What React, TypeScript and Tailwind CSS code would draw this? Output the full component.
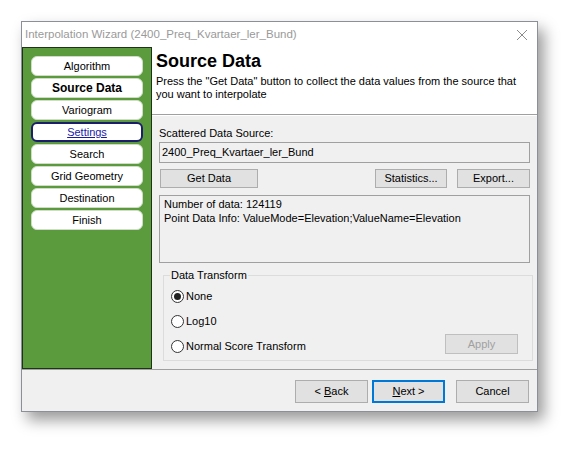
import React from "react";

const steps = [
  "Algorithm",
  "Source Data",
  "Variogram",
  "Settings",
  "Search",
  "Grid Geometry",
  "Destination",
  "Finish",
];

function WinButton({
  children,
  className = "",
  disabled = false,
  focused = false,
}: {
  children: React.ReactNode;
  className?: string;
  disabled?: boolean;
  focused?: boolean;
}) {
  return (
    <div
      className={`flex items-center justify-center bg-[#e1e1e1] ${
        focused ? "border-2 border-[#0078d7]" : "border border-[#adadad]"
      } ${disabled ? "text-[#a0a0a0] bg-[#cccccc] border-[#bfbfbf]" : "text-black"} ${className}`}
    >
      {children}
    </div>
  );
}

function Radio({ label, checked = false }: { label: string; checked?: boolean }) {
  return (
    <div className="flex items-center gap-[2px] h-[14px]">
      <div className="w-[13px] h-[13px] rounded-full border border-[#333] bg-white flex items-center justify-center">
        {checked && <div className="w-[7px] h-[7px] rounded-full bg-[#222]" />}
      </div>
      <span>{label}</span>
    </div>
  );
}

export default function App() {
  return (
    <div
      className="w-[580px] h-[454px] bg-white pt-[21px] pl-[21px] text-[11px] text-black"
      style={{ fontFamily: '"Liberation Sans", Arial, sans-serif' }}
    >
      <div className="w-[517px] h-[391px] border border-[#8a8f99] bg-[#f0f0f0] flex flex-col shadow-[6px_8px_14px_rgba(0,0,0,0.4)]">
        {/* title bar */}
        <div className="h-[25px] bg-white flex items-center justify-between pl-[3px] pr-[8px]">
          <span className="text-[11.5px] text-[#9a9a9a]">
            Interpolation Wizard (2400_Preq_Kvartaer_ler_Bund)
          </span>
          <svg width="12" height="12" viewBox="0 0 12 12" className="mr-[1px]">
            <path d="M1 1 L11 11 M11 1 L1 11" stroke="#8c8c8c" strokeWidth="1" />
          </svg>
        </div>

        <div className="flex h-[322px]">
          {/* sidebar */}
          <div className="w-[130px] h-full bg-[#5b9b3d] border border-[#1e3318] pt-[8px] pl-[8px] flex flex-col gap-[2px]">
            {steps.map((s) => {
              const active = s === "Settings";
              const current = s === "Source Data";
              return (
                <div
                  key={s}
                  className={`w-[112px] h-[20px] rounded-[6px] bg-white flex items-center justify-center ${
                    active
                      ? "border-2 border-[#1b1f6b] text-[#1a1aa8] underline"
                      : "border border-[#cfdcc8]"
                  } ${current ? "font-bold text-[12px]" : ""}`}
                >
                  {s}
                </div>
              );
            })}
          </div>

          {/* content */}
          <div className="flex-1 flex flex-col">
            <div className="h-[68px] bg-white border-b border-[#a0a0a0] pl-[4px] pt-[3px]">
              <div className="text-[18px] font-bold leading-[22px]">Source Data</div>
              <div className="mt-[3px] leading-[13px]">
                Press the "Get Data" button to collect the data values from the source that
                <br />
                you want to interpolate
              </div>
            </div>

            <div className="flex-1 border-t border-white pl-[7px] pt-[11px] flex flex-col">
              <div className="leading-[13px]">Scattered Data Source:</div>
              <div className="mt-[2px] h-[21px] w-[371px] border border-[#a0a0a0] flex items-center pl-[2px]">
                2400_Preq_Kvartaer_ler_Bund
              </div>
              <div className="mt-[6px] h-[19px] w-[371px] flex">
                <WinButton className="w-[98px] ml-[1px]">Get Data</WinButton>
                <div className="flex-1" />
                <WinButton className="w-[72px]">Statistics...</WinButton>
                <WinButton className="w-[73px] ml-[10px]">Export...</WinButton>
              </div>
              <div className="mt-[7px] h-[68px] w-[371px] border border-[#a0a0a0] pl-[4px] pt-[1px] leading-[14px]">
                <div>Number of data: 124119</div>
                <div>Point Data Info: ValueMode=Elevation;ValueName=Elevation</div>
              </div>

              <div className="relative mt-[12px] ml-[4px] h-[86px] w-[370px] border border-[#dcdcdc] pl-[7px] pt-[13px]">
                <span className="absolute left-[6px] top-[-8px] bg-[#f0f0f0] px-[1px] leading-[14px]">
                  Data Transform
                </span>
                <div className="flex flex-col gap-[11px]">
                  <Radio label="None" checked />
                  <Radio label="Log10" />
                  <div className="flex items-center justify-between">
                    <Radio label="Normal Score Transform" />
                    <WinButton disabled className="w-[73px] h-[20px] mr-[14px] mt-[-5px]">
                      Apply
                    </WinButton>
                  </div>
                </div>
              </div>
            </div>
          </div>
        </div>

        {/* footer */}
        <div className="flex-1 border-t border-[#a0a0a0] flex items-start justify-end pt-[10px] pr-[8px]">
          <div className="flex">
            <WinButton className="w-[73px] h-[23px]">
              <span>
                &lt; <span className="underline">B</span>ack
              </span>
            </WinButton>
            <WinButton focused className="w-[73px] h-[23px] ml-[4px]">
              <span>
                <span className="underline">N</span>ext &gt;
              </span>
            </WinButton>
            <WinButton className="w-[73px] h-[23px] ml-[11px]">Cancel</WinButton>
          </div>
        </div>
      </div>
    </div>
  );
}
